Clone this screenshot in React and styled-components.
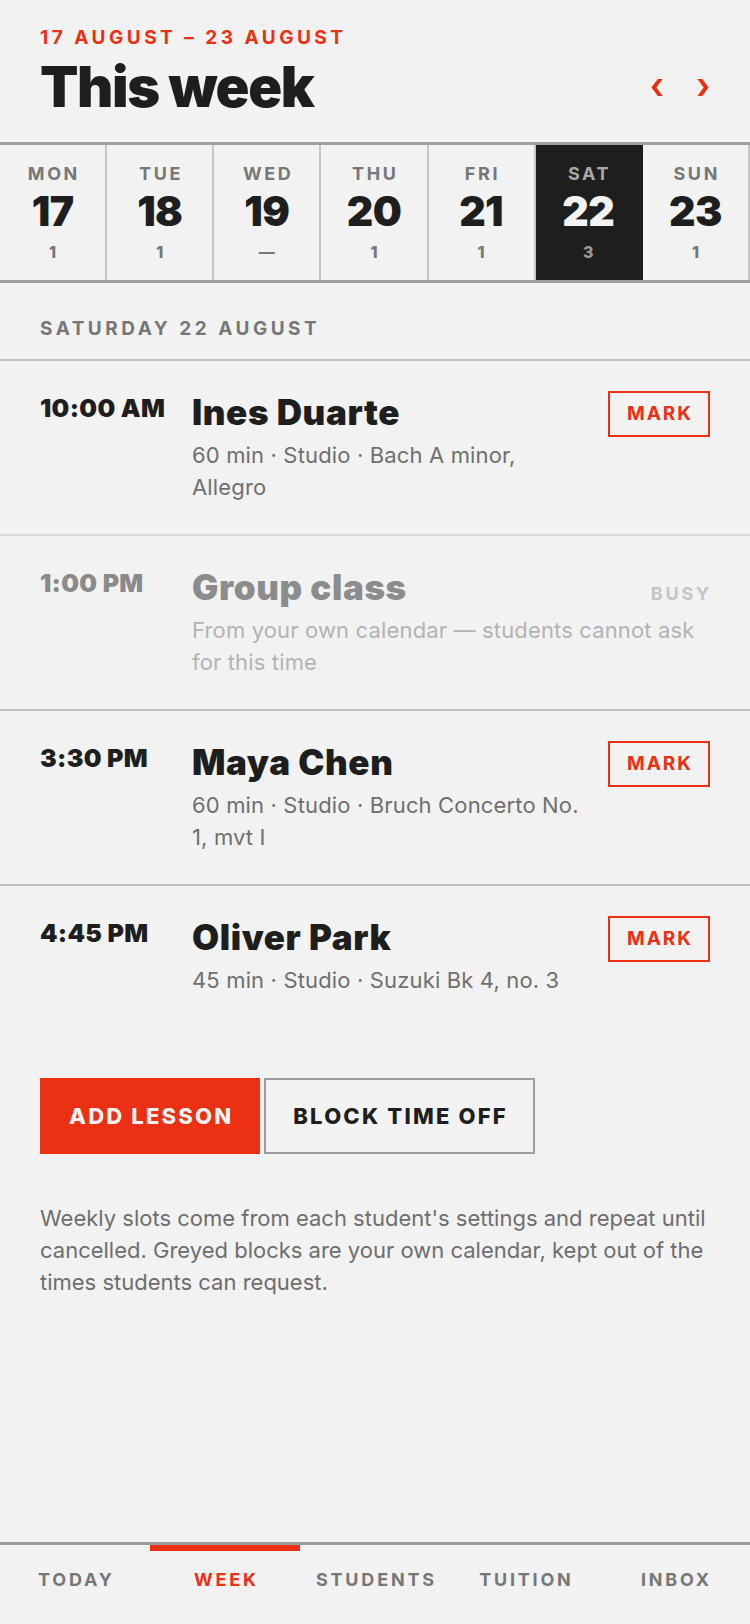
import React from "react";
import styled, { createGlobalStyle } from "styled-components";

const RED = "#ec3014";
const INK = "#1e1e1e";
const BG = "#f2f2f2";
const FONT = `Inter, "Liberation Sans", Arial, sans-serif`;

const Global = createGlobalStyle`
  html, body { margin: 0; padding: 0; background: ${BG}; }
  body { font-family: ${FONT}; color: ${INK}; }
  * { box-sizing: border-box; }
  button { font-family: inherit; }
`;

const Page = styled.div`
  min-height: 100vh;
  display: flex;
  flex-direction: column;
  background: ${BG};
`;

const Content = styled.main`
  flex: 1;
`;

const Header = styled.header`
  padding: 26px 40px 27px;
`;

const RangeLabel = styled.div`
  font-size: 19px;
  line-height: 23px;
  font-weight: 700;
  letter-spacing: 3.5px;
  color: ${RED};
`;

const TitleRow = styled.div`
  margin-top: 10px;
  display: flex;
  align-items: center;
  justify-content: space-between;
`;

const Title = styled.h1`
  margin: 0;
  font-size: 56px;
  line-height: 56px;
  font-weight: 900;
  letter-spacing: -1.4px;
  color: ${INK};
`;

const Pager = styled.div`
  display: flex;
  gap: 34px;
  align-items: center;
  padding-right: 1px;
`;

const ChevronButton = styled.button`
  background: none;
  border: none;
  padding: 0;
  width: 12px;
  height: 17px;
  display: block;
  cursor: pointer;
  svg { display: block; }
`;

const Strip = styled.div`
  display: grid;
  grid-template-columns: repeat(7, 1fr);
  border-top: 3px solid #a0a0a0;
  border-bottom: 3px solid #a0a0a0;
`;

const DayCell = styled.div`
  display: flex;
  flex-direction: column;
  align-items: center;
  padding: 18px 0 18px;
  border-right: 2px solid ${(p) => (p.$active ? INK : "#c6c6c6")};
  background: ${(p) => (p.$active ? INK : "transparent")};
  &:last-child { border-right-color: #c6c6c6; }
`;

const DayName = styled.div`
  font-size: 18px;
  line-height: 22px;
  font-weight: 700;
  letter-spacing: 2.6px;
  padding-left: 2.6px;
  color: ${(p) => (p.$active ? "#a9a9a9" : "#777")};
`;

const DayNum = styled.div`
  margin-top: 4px;
  font-size: 41px;
  line-height: 45px;
  font-weight: 900;
  letter-spacing: -0.6px;
  color: ${(p) => (p.$active ? BG : INK)};
`;

const DayCount = styled.div`
  margin-top: 8px;
  font-size: 16px;
  line-height: 20px;
  font-weight: 800;
  color: ${(p) => (p.$active ? "#9a9a9a" : "#777")};
`;

const SectionLabel = styled.h2`
  margin: 0;
  padding: 34px 40px 19px;
  font-size: 19px;
  line-height: 23px;
  font-weight: 700;
  letter-spacing: 3.5px;
  color: #777;
`;

const List = styled.div`
  border-top: 2px solid #c2c2c2;
`;

const Row = styled.div`
  display: flex;
  align-items: flex-start;
  padding: 30px 40px 31px;
  border-bottom: ${(p) => (p.$divider ? `2px solid ${p.$divider}` : "none")};
`;

const Time = styled.div`
  width: 152px;
  flex: none;
  margin-top: 2px;
  font-size: 25px;
  line-height: 30px;
  font-weight: 900;
  letter-spacing: 0.3px;
  color: ${(p) => (p.$muted ? "#8a8a8a" : INK)};
`;

const Main = styled.div`
  flex: 1;
  min-width: 0;
`;

const TitleLine = styled.div`
  display: flex;
  align-items: baseline;
  justify-content: space-between;
  gap: 16px;
`;

const Name = styled.div`
  font-size: 35px;
  line-height: 42px;
  font-weight: 900;
  letter-spacing: 0.6px;
  color: ${(p) => (p.$muted ? "#8c8c8c" : INK)};
`;

const BusyTag = styled.span`
  font-size: 18px;
  font-weight: 700;
  letter-spacing: 2.8px;
  margin-right: -2px;
  color: #c4c4c4;
`;

const Desc = styled.div`
  margin-top: 6px;
  font-size: 22px;
  line-height: 32px;
  letter-spacing: 0.15px;
  color: ${(p) => (p.$muted ? "#b3b3b3" : "#6f6f6f")};
`;

const MarkButton = styled.button`
  flex: none;
  margin-left: 24px;
  height: 46px;
  width: 102px;
  padding: 0 0 0 2px;
  border: 2px solid ${RED};
  background: transparent;
  color: ${RED};
  font-size: 19px;
  line-height: 22px;
  font-weight: 700;
  letter-spacing: 2px;
  cursor: pointer;
`;

const Actions = styled.div`
  display: flex;
  gap: 4px;
  padding: 51px 40px 0;
`;

const ActionButton = styled.button`
  height: 76px;
  padding: 0 25px 0 27px;
  border: 2px solid ${(p) => (p.$primary ? RED : "#9e9e9e")};
  background: ${(p) => (p.$primary ? RED : "transparent")};
  color: ${(p) => (p.$primary ? BG : INK)};
  font-size: 22px;
  line-height: 26px;
  font-weight: 800;
  letter-spacing: 2.2px;
  cursor: pointer;
`;

const Note = styled.p`
  margin: 0;
  padding: 48px 40px 0;
  font-size: 22px;
  line-height: 32px;
  letter-spacing: 0;
  color: #6e6e6e;
`;

const Nav = styled.nav`
  display: grid;
  grid-template-columns: repeat(5, 1fr);
  border-top: 3px solid #9e9e9e;
`;

const Tab = styled.a`
  display: block;
  text-align: center;
  border-top: 6px solid ${(p) => (p.$active ? RED : "transparent")};
  padding: 18px 0 33px 2.8px;
  font-size: 18px;
  line-height: 22px;
  font-weight: 700;
  letter-spacing: 2.8px;
  text-decoration: none;
  color: ${(p) => (p.$active ? RED : "#777")};
`;

const Chevron = ({ dir }) => (
  <svg width="12" height="17" viewBox="0 0 12 17">
    <polygon
      fill={RED}
      points={
        dir === "left"
          ? "6.8,0 11.6,0 5.4,8.5 11.6,17 6.8,17 0.4,8.5"
          : "5.2,0 0.4,0 6.6,8.5 0.4,17 5.2,17 11.6,8.5"
      }
    />
  </svg>
);

const days = [
  { name: "MON", num: 17, count: "1" },
  { name: "TUE", num: 18, count: "1" },
  { name: "WED", num: 19, count: "—" },
  { name: "THU", num: 20, count: "1" },
  { name: "FRI", num: 21, count: "1" },
  { name: "SAT", num: 22, count: "3", active: true },
  { name: "SUN", num: 23, count: "1" },
];

const lessons = [
  {
    time: "10:00 AM",
    name: "Ines Duarte",
    desc: "60 min · Studio · Bach A minor, Allegro",
    divider: "#d8d8d8",
  },
  {
    time: "1:00 PM",
    name: "Group class",
    desc: "From your own calendar — students cannot ask for this time",
    busy: true,
    divider: "#c2c2c2",
  },
  {
    time: "3:30 PM",
    name: "Maya Chen",
    desc: "60 min · Studio · Bruch Concerto No. 1, mvt I",
    divider: "#c2c2c2",
  },
  {
    time: "4:45 PM",
    name: "Oliver Park",
    desc: "45 min · Studio · Suzuki Bk 4, no. 3",
  },
];

const tabs = ["TODAY", "WEEK", "STUDENTS", "TUITION", "INBOX"];

export default function App() {
  return (
    <Page>
      <Global />
      <Content>
        <Header>
          <RangeLabel>17 AUGUST – 23 AUGUST</RangeLabel>
          <TitleRow>
            <Title>This week</Title>
            <Pager>
              <ChevronButton aria-label="Previous week">
                <Chevron dir="left" />
              </ChevronButton>
              <ChevronButton aria-label="Next week">
                <Chevron dir="right" />
              </ChevronButton>
            </Pager>
          </TitleRow>
        </Header>

        <Strip>
          {days.map((d) => (
            <DayCell key={d.name} $active={d.active}>
              <DayName $active={d.active}>{d.name}</DayName>
              <DayNum $active={d.active}>{d.num}</DayNum>
              <DayCount $active={d.active}>{d.count}</DayCount>
            </DayCell>
          ))}
        </Strip>

        <SectionLabel>SATURDAY 22 AUGUST</SectionLabel>

        <List>
          {lessons.map((l) => (
            <Row key={l.time} $divider={l.divider}>
              <Time $muted={l.busy}>{l.time}</Time>
              <Main>
                <TitleLine>
                  <Name $muted={l.busy}>{l.name}</Name>
                  {l.busy && <BusyTag>BUSY</BusyTag>}
                </TitleLine>
                <Desc $muted={l.busy}>{l.desc}</Desc>
              </Main>
              {!l.busy && <MarkButton>MARK</MarkButton>}
            </Row>
          ))}
        </List>

        <Actions>
          <ActionButton $primary>ADD LESSON</ActionButton>
          <ActionButton>BLOCK TIME OFF</ActionButton>
        </Actions>

        <Note>
          Weekly slots come from each student's settings and repeat until
          cancelled. Greyed blocks are your own calendar, kept out of the times
          students can request.
        </Note>
      </Content>

      <Nav>
        {tabs.map((t) => (
          <Tab key={t} href="#" $active={t === "WEEK"}>
            {t}
          </Tab>
        ))}
      </Nav>
    </Page>
  );
}
